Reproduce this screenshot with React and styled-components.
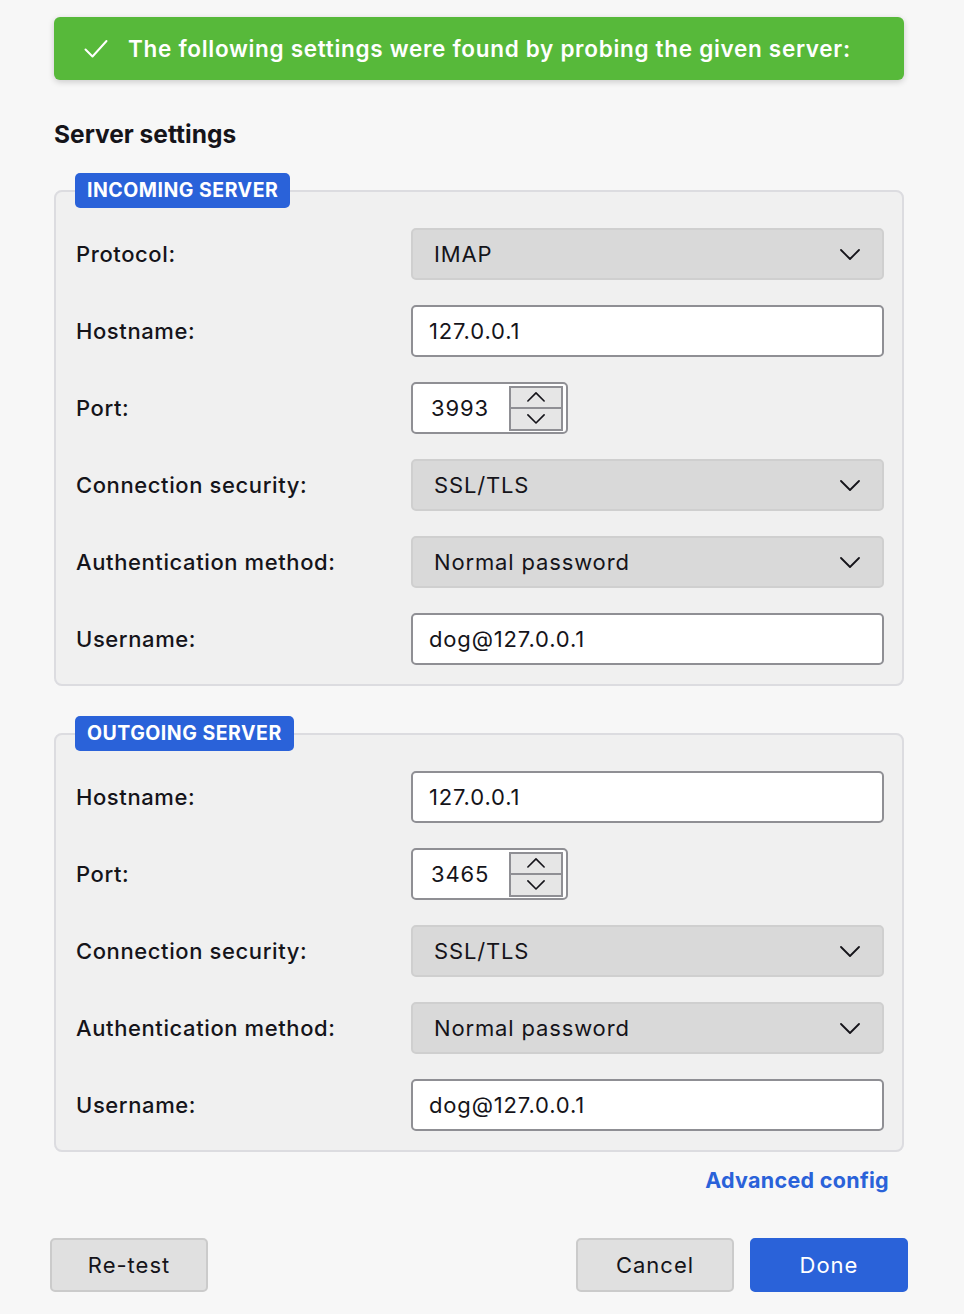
import React from "react";
import styled, { createGlobalStyle } from "styled-components";

const GlobalStyle = createGlobalStyle`
  html, body {
    margin: 0;
    padding: 0;
    background: #f7f7f7;
  }
  body {
    font-family: Inter, "Noto Sans", "Liberation Sans", sans-serif;
    color: #15141a;
  }
`;

const Page = styled.div`
  width: 964px;
  min-height: 1314px;
  padding: 17px 60px 0 54px;
  box-sizing: border-box;
`;

const Banner = styled.div`
  display: flex;
  align-items: center;
  gap: 20px;
  height: 63px;
  padding-left: 30px;
  background: #57b93a;
  border-radius: 6px;
  box-shadow: 0 2px 6px rgba(0, 0, 0, 0.18);
  color: #fff;
  font-size: 22.5px;
  font-weight: 600;
  letter-spacing: 0.7px;
`;

const Heading = styled.h2`
  margin: 39px 0 24px;
  font-size: 24.5px;
  font-weight: 700;
  line-height: 30px;
`;

const Group = styled.fieldset`
  margin: 0 0 30px;
  padding: 20px 18px 19px 19px;
  border: 2px solid #dcdce0;
  border-radius: 8px;
  background: #f0f0f0;
  display: grid;
  grid-template-columns: 336px 1fr;
  row-gap: 25px;
  align-items: center;
`;

const Legend = styled.legend`
  padding: 0 12px;
  height: 35px;
  line-height: 35px;
  background: #2a62d9;
  color: #fff;
  border-radius: 5px;
  font-size: 19.5px;
  font-weight: 700;
  letter-spacing: 0.5px;
  margin-left: 0;
`;

const Label = styled.label`
  font-size: 22px;
  font-weight: 500;
  letter-spacing: 0.6px;
  padding-left: 1px;
`;

const Select = styled.div`
  display: flex;
  align-items: center;
  justify-content: space-between;
  height: 52px;
  box-sizing: border-box;
  padding: 0 22px 0 21px;
  background: #d9d9d9;
  border: 2px solid #cfcfcf;
  border-radius: 5px;
  font-size: 22px;
  letter-spacing: 0.85px;
`;

const Input = styled.div`
  display: flex;
  align-items: center;
  height: 52px;
  box-sizing: border-box;
  padding: 0 16px;
  background: #fff;
  border: 2px solid #8f8f94;
  border-radius: 5px;
  font-size: 22px;
  letter-spacing: 0.85px;
  width: ${(p) => (p.narrow ? "157px" : "auto")};
`;

const PortText = styled.span`
  flex: 1;
  padding-left: 2px;
`;

const Spinner = styled.div`
  display: flex;
  flex-direction: column;
  width: 54px;
  height: 45px;
  margin-right: -13px;
  border: 2px solid #8f8f94;
  box-sizing: border-box;
  background: #e6e6e6;
`;

const SpinHalf = styled.div`
  flex: 1;
  display: flex;
  align-items: center;
  justify-content: center;
  & + & {
    border-top: 2px solid #8f8f94;
  }
`;

const LinkRow = styled.div`
  display: flex;
  justify-content: flex-end;
  margin-top: -15px;
  padding-right: 15px;
`;

const Link = styled.a`
  color: #2a62d9;
  font-size: 21.5px;
  font-weight: 700;
  letter-spacing: 0.3px;
  text-decoration: none;
`;

const Footer = styled.div`
  display: flex;
  align-items: center;
  margin: 45px -4px 0 -4px;
  gap: 16px;
`;

const Button = styled.button`
  width: 158px;
  height: 54px;
  font-family: inherit;
  font-size: 22px;
  letter-spacing: 1px;
  border-radius: 5px;
  border: 2px solid ${(p) => (p.primary ? "#2a62d9" : "#cbcbcb")};
  background: ${(p) => (p.primary ? "#2a62d9" : "#e0e0e0")};
  color: ${(p) => (p.primary ? "#fff" : "#15141a")};
  &:first-child {
    margin-right: auto;
  }
`;

const Check = () => (
  <svg width="24" height="20" viewBox="0 0 24 20" fill="none">
    <path d="M1.5 10.5 L8.5 17.5 L22.5 2" stroke="#fff" strokeWidth="2" strokeLinecap="round" strokeLinejoin="round" />
  </svg>
);

const Chevron = ({ up, size = 20 }) => (
  <svg width={size} height={size * 0.55} viewBox="0 0 20 11" fill="none">
    <path
      d={up ? "M1 10 L10 1 L19 10" : "M1 1 L10 10 L19 1"}
      stroke="#15141a"
      strokeWidth="1.8"
      strokeLinecap="round"
      strokeLinejoin="round"
    />
  </svg>
);

const Field = ({ label, children }) => (
  <>
    <Label>{label}</Label>
    {children}
  </>
);

const Dropdown = ({ value }) => (
  <Select>
    <span>{value}</span>
    <Chevron />
  </Select>
);

const Port = ({ value }) => (
  <Input narrow>
    <PortText>{value}</PortText>
    <Spinner>
      <SpinHalf>
        <Chevron up size={18} />
      </SpinHalf>
      <SpinHalf>
        <Chevron size={18} />
      </SpinHalf>
    </Spinner>
  </Input>
);

export default function App() {
  return (
    <Page>
      <GlobalStyle />
      <Banner>
        <Check />
        The following settings were found by probing the given server:
      </Banner>

      <Heading>Server settings</Heading>

      <Group>
        <Legend>INCOMING SERVER</Legend>
        <Field label="Protocol:">
          <Dropdown value="IMAP" />
        </Field>
        <Field label="Hostname:">
          <Input>127.0.0.1</Input>
        </Field>
        <Field label="Port:">
          <Port value="3993" />
        </Field>
        <Field label="Connection security:">
          <Dropdown value="SSL/TLS" />
        </Field>
        <Field label="Authentication method:">
          <Dropdown value="Normal password" />
        </Field>
        <Field label="Username:">
          <Input>dog@127.0.0.1</Input>
        </Field>
      </Group>

      <Group>
        <Legend>OUTGOING SERVER</Legend>
        <Field label="Hostname:">
          <Input>127.0.0.1</Input>
        </Field>
        <Field label="Port:">
          <Port value="3465" />
        </Field>
        <Field label="Connection security:">
          <Dropdown value="SSL/TLS" />
        </Field>
        <Field label="Authentication method:">
          <Dropdown value="Normal password" />
        </Field>
        <Field label="Username:">
          <Input>dog@127.0.0.1</Input>
        </Field>
      </Group>

      <LinkRow>
        <Link href="#">Advanced config</Link>
      </LinkRow>

      <Footer>
        <Button>Re-test</Button>
        <Button>Cancel</Button>
        <Button primary>Done</Button>
      </Footer>
    </Page>
  );
}
